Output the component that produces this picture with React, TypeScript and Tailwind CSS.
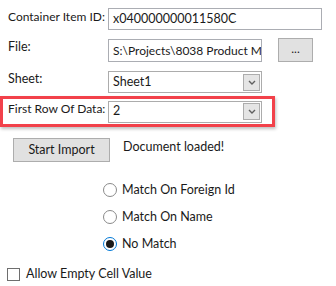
import React from 'react';

const font = { fontFamily: 'Lato, "Liberation Sans", sans-serif' };

const ComboArrow: React.FC = () => (
  <div className="w-[17px] h-[17px] mr-[1px] border border-[#adadad] bg-[#e5e5e5] flex items-center justify-center">
    <svg width="8" height="5" viewBox="0 0 8 5">
      <path d="M1 1 L4 4 L7 1" fill="none" stroke="#606060" strokeWidth="1.4" />
    </svg>
  </div>
);

const Radio: React.FC<{ label: string; checked?: boolean }> = ({ label, checked }) => (
  <div className="flex items-center h-[14px] ml-[103px]">
    <div
      className={`w-[14px] h-[14px] rounded-full border flex items-center justify-center bg-white ${
        checked ? 'border-[#0078d7]' : 'border-[#8a8a8a]'
      }`}
    >
      {checked && <div className="w-[8px] h-[8px] rounded-full bg-[#1a1a1a]" />}
    </div>
    <span className="ml-[5px] text-[12.5px] text-[#1a1a1a] leading-none">{label}</span>
  </div>
);

const App: React.FC = () => {
  return (
    <div className="w-[336px] h-[286px] bg-white text-[12px] text-[#1a1a1a] overflow-hidden whitespace-nowrap" style={font}>
      {/* Container Item ID */}
      <div className="flex items-start pt-[8px]">
        <div className="w-[108px] shrink-0 pl-[8px] pt-[1px] leading-[16px] text-[12px]">Container Item ID:</div>
        <div className="w-[214px] h-[22px] border border-[#abadb3] flex items-center px-[4px] overflow-hidden text-[12.5px]">
          x040000000011580C
        </div>
      </div>

      {/* File */}
      <div className="flex items-start mt-[9px]">
        <div className="w-[108px] shrink-0 pl-[8px] leading-[16px] text-[12.5px]">File:</div>
        <div className="w-[154px] shrink-0 h-[23px] border border-[#abadb3] flex items-center px-[4px] overflow-hidden text-[12px]">
          S:\Projects\8038 Product M
        </div>
        <button className="ml-[16px] -mt-[1px] w-[35px] h-[24px] shrink-0 border border-[#adadad] bg-[#e1e1e1] text-[12px] leading-none flex items-end justify-center pb-[6px]">
          ...
        </button>
      </div>

      {/* Sheet */}
      <div className="flex items-start mt-[9px]">
        <div className="w-[108px] shrink-0 pl-[8px] leading-[16px] text-[12.5px]">Sheet:</div>
        <div className="w-[154px] h-[22px] border border-[#acacac] flex items-center justify-between pl-[4px] text-[12.5px]">
          <span>Sheet1</span>
          <ComboArrow />
        </div>
      </div>

      {/* First Row Of Data (highlighted) */}
      <div className="mt-[3px] w-[275px] h-[31px] border-[3px] border-[#f2414a] shadow-[1px_2px_3px_rgba(0,0,0,0.25)] flex items-center">
        <div className="w-[105px] shrink-0 pl-[5px] -mt-[5px] leading-[16px] text-[12px]">First Row Of Data:</div>
        <div className="w-[154px] h-[22px] border border-[#acacac] flex items-center justify-between pl-[4px] text-[12.5px]">
          <span>2</span>
          <ComboArrow />
        </div>
      </div>

      {/* Start Import */}
      <div className="flex items-start mt-[11px]">
        <button className="ml-[13px] w-[97px] h-[24px] shrink-0 border border-[#adadad] bg-[#e1e1e1] leading-none text-[12.5px]">
          Start Import
        </button>
        <span className="ml-[13px] mt-[1px] leading-[16px] text-[12.5px]">Document loaded!</span>
      </div>

      {/* Match options */}
      <div className="flex flex-col gap-[13px] mt-[21px]">
        <Radio label="Match On Foreign Id" />
        <Radio label="Match On Name" />
        <Radio label="No Match" checked />
      </div>

      {/* Allow Empty */}
      <div className="flex items-center mt-[17px] ml-[7px]">
        <div className="w-[13px] h-[13px] border border-[#6e6e6e] bg-white" />
        <span className="ml-[6px] leading-none text-[12.5px]">Allow Empty Cell Value</span>
      </div>
    </div>
  );
};

export default App;
